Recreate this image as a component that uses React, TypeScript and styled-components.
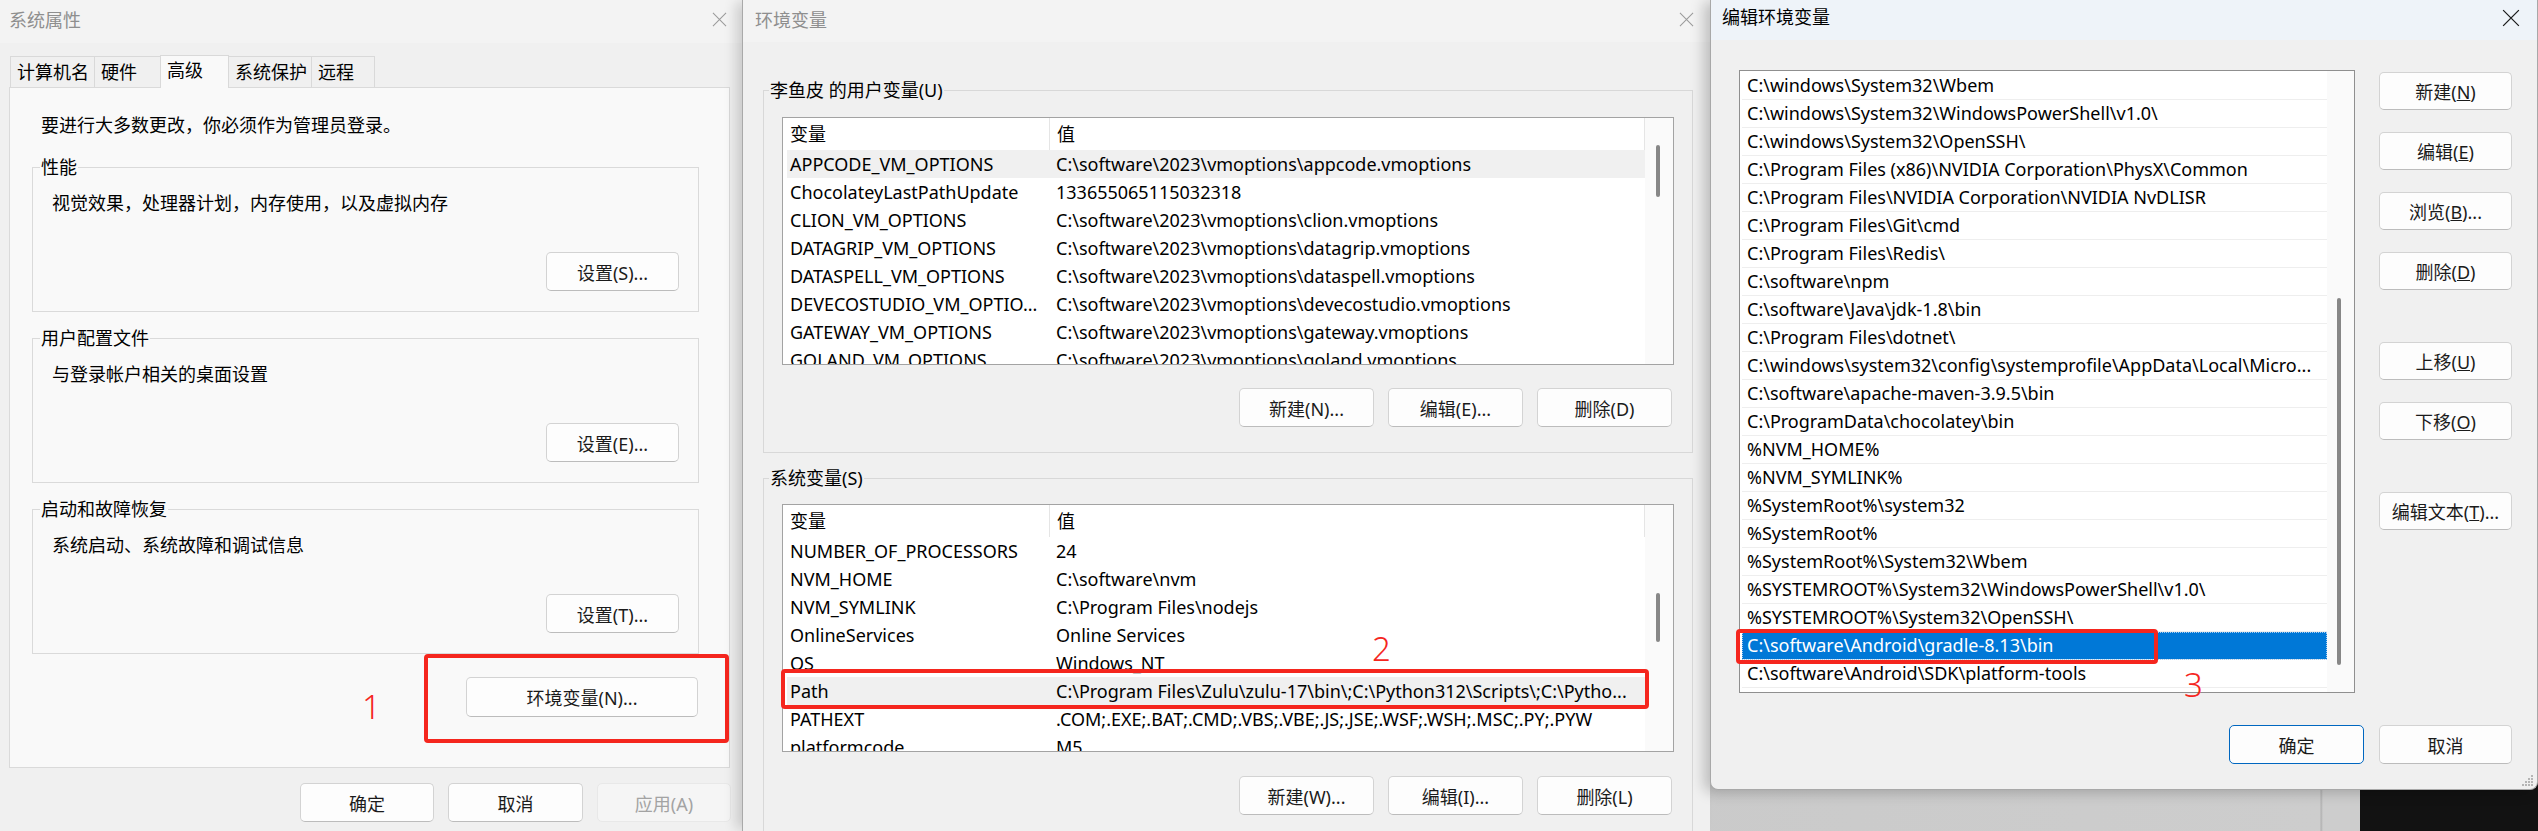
import { FC, ReactNode } from "react";
import styled, { createGlobalStyle, css } from "styled-components";

const RED = "#f5261e";

const GlobalStyle = createGlobalStyle`
  html, body {
    margin: 0;
    padding: 0;
    overflow: hidden;
  }
  body {
    font-family: "Noto Sans", "Noto Sans CJK SC", sans-serif;
    font-size: 18px;
    color: #000;
  }
`;

const Desktop = styled.div`
  display: flex;
  align-items: flex-start;
  width: 2538px;
  height: 831px;
  overflow: hidden;
  background: linear-gradient(
    to right,
    #c3c3c3 0,
    #cdcdcd 2320px,
    #b0b0b0 2321px,
    #cdcdcd 2323px,
    #cdcdcd 2360px,
    #121212 2360px
  );
`;

const Window = styled.div<{ $width: number; $height: number; $variant: "back" | "middle" | "front" }>`
  position: relative;
  flex: none;
  box-sizing: border-box;
  display: flex;
  flex-direction: column;
  width: ${(p) => p.$width}px;
  height: ${(p) => p.$height}px;
  background: #f0f0f0;
  overflow: hidden;
  ${(p) =>
    p.$variant === "middle" &&
    css`
      border-left: 1px solid #a9a9a9;
      box-shadow: -8px 0 12px -2px rgba(0, 0, 0, 0.16);
    `}
  ${(p) =>
    p.$variant === "front" &&
    css`
      border: 1px solid #a8a8a8;
      border-top: none;
      border-radius: 0 0 8px 8px;
      box-shadow: -6px 2px 14px rgba(0, 0, 0, 0.22);
    `}
`;

const TitleBar = styled.div<{ $height: number; $top: number; $left: number; $right: number; $active?: boolean }>`
  flex: none;
  box-sizing: border-box;
  display: flex;
  align-items: flex-start;
  justify-content: space-between;
  height: ${(p) => p.$height}px;
  padding: ${(p) => `${p.$top}px ${p.$right}px 0 ${p.$left}px`};
  background: ${(p) => (p.$active ? "#eef3f9" : "#f3f3f3")};
  color: ${(p) => (p.$active ? "#000" : "#8e8e8e")};
  line-height: 24px;
`;

const CloseGlyph = styled.svg`
  flex: none;
  margin-top: 4px;
`;

const CloseIcon: FC<{ active?: boolean; size?: number }> = ({ active, size = 15 }) => (
  <CloseGlyph width={size} height={size} viewBox="0 0 16 16">
    <path d="M1 1L15 15M15 1L1 15" stroke={active ? "#1a1a1a" : "#9a9a9a"} strokeWidth="1.1" fill="none" />
  </CloseGlyph>
);

const Button = styled.button<{ $width: number; $default?: boolean }>`
  flex: none;
  box-sizing: border-box;
  width: ${(p) => p.$width}px;
  height: 39px;
  padding: 0;
  font-family: inherit;
  font-size: 18px;
  color: #1b1b1b;
  background: #fdfdfd;
  border: 1px solid ${(p) => (p.$default ? "#0067c0" : "#d3d3d3")};
  border-bottom-color: ${(p) => (p.$default ? "#0067c0" : "#bcbcbc")};
  border-radius: 5px;

  &:disabled {
    color: #a3a3a3;
    background: #f5f5f5;
    border-color: #e8e8e8;
  }
`;

const ButtonRow = styled.div<{ $gap: number; $top: number; $right?: number }>`
  display: flex;
  justify-content: flex-end;
  gap: ${(p) => p.$gap}px;
  margin-top: ${(p) => p.$top}px;
  padding-right: ${(p) => p.$right ?? 0}px;
`;

const Frame = styled.div<{ $height: number; $top: number; $pad: string; $border: string }>`
  position: relative;
  flex: none;
  box-sizing: border-box;
  display: flex;
  flex-direction: column;
  height: ${(p) => p.$height}px;
  margin-top: ${(p) => p.$top}px;
  padding: ${(p) => p.$pad};
  border: 1px solid ${(p) => p.$border};
`;

const Legend = styled.span<{ $bg: string; $left: number }>`
  position: absolute;
  top: -13px;
  left: ${(p) => p.$left}px;
  padding: 0 1px;
  line-height: 24px;
  background: ${(p) => p.$bg};
  white-space: nowrap;
`;

type GroupProps = {
  label: string;
  height: number;
  top: number;
  pad: string;
  bg: string;
  labelLeft: number;
  border?: string;
  children: ReactNode;
};

const GroupBox: FC<GroupProps> = ({ label, height, top, pad, bg, labelLeft, border = "#dadada", children }) => (
  <Frame $height={height} $top={top} $pad={pad} $border={border}>
    <Legend $bg={bg} $left={labelLeft}>
      {label}
    </Legend>
    {children}
  </Frame>
);

const RedBox = styled.div<{ $left: number; $top: number; $width: number; $height: number }>`
  position: absolute;
  left: ${(p) => p.$left}px;
  top: ${(p) => p.$top}px;
  width: ${(p) => p.$width}px;
  height: ${(p) => p.$height}px;
  box-sizing: border-box;
  border: 4px solid ${RED};
  border-radius: 4px;
  pointer-events: none;
`;

const Marker = styled.span<{ $left: number; $top: number }>`
  position: absolute;
  left: ${(p) => p.$left}px;
  top: ${(p) => p.$top}px;
  font-family: "Noto Sans", sans-serif;
  font-weight: 300;
  font-size: 33px;
  line-height: 1;
  color: ${RED};
`;

/* ---------- 系统属性 ---------- */

const TabStrip = styled.div`
  display: flex;
  align-items: flex-end;
  height: 32px;
  margin: 12px 0 0 11px;
`;

const Tab = styled.div<{ $width: number; $selected?: boolean }>`
  position: relative;
  box-sizing: border-box;
  width: ${(p) => p.$width}px;
  height: ${(p) => (p.$selected ? 33 : 31)}px;
  margin-left: -1px;
  margin-bottom: ${(p) => (p.$selected ? -1 : 0)}px;
  padding-left: 6px;
  border: 1px solid #d9d9d9;
  border-bottom: none;
  background: ${(p) => (p.$selected ? "#f9f9f9" : "#f0f0f0")};
  line-height: ${(p) => (p.$selected ? 28 : 30)}px;
  z-index: ${(p) => (p.$selected ? 1 : 0)};
  white-space: nowrap;
`;

const TabPanel = styled.div`
  position: relative;
  box-sizing: border-box;
  display: flex;
  flex-direction: column;
  width: 721px;
  height: 681px;
  margin-left: 9px;
  padding: 0 30px 0 22px;
  border: 1px solid #dadada;
  background: #f9f9f9;
`;

const InfoText = styled.div`
  margin: 25px 0 0 9px;
  line-height: 24px;
`;

const Description = styled.div`
  line-height: 24px;
`;

const GroupButton = styled(Button)`
  align-self: flex-end;
  margin-top: auto;
`;

const EnvButton = styled(Button)`
  align-self: flex-end;
  height: 40px;
  margin: 23px 1px 0 0;
`;

const SystemProperties: FC = () => {
  const groups = [
    { label: "性能", text: "视觉效果，处理器计划，内存使用，以及虚拟内存", btn: "设置(S)..." },
    { label: "用户配置文件", text: "与登录帐户相关的桌面设置", btn: "设置(E)..." },
    { label: "启动和故障恢复", text: "系统启动、系统故障和调试信息", btn: "设置(T)..." },
  ];
  const tabs = [
    { name: "计算机名", w: 85 },
    { name: "硬件", w: 67 },
    { name: "高级", w: 69, selected: true },
    { name: "系统保护", w: 84 },
    { name: "远程", w: 64 },
  ];
  return (
    <Window $width={742} $height={831} $variant="back">
      <TitleBar $height={43} $top={8} $left={9} $right={15}>
        <span>系统属性</span>
        <CloseIcon />
      </TitleBar>
      <TabStrip>
        {tabs.map((t) => (
          <Tab key={t.name} $width={t.w} $selected={t.selected}>
            {t.name}
          </Tab>
        ))}
      </TabStrip>
      <TabPanel>
        <InfoText>要进行大多数更改，你必须作为管理员登录。</InfoText>
        {groups.map((g, i) => (
          <GroupBox
            key={g.label}
            label={g.label}
            height={145}
            top={i === 0 ? 30 : 26}
            pad="23px 19px 20px 19px"
            bg="#f9f9f9"
            labelLeft={7}
          >
            <Description>{g.text}</Description>
            <GroupButton $width={133}>{g.btn}</GroupButton>
          </GroupBox>
        ))}
        <EnvButton $width={232}>环境变量(N)...</EnvButton>
        <RedBox $left={414} $top={566} $width={305} $height={89} />
        <Marker $left={352} $top={602}>
          1
        </Marker>
      </TabPanel>
      <ButtonRow $gap={14} $top={15} $right={11}>
        <Button $width={134}>确定</Button>
        <Button $width={135}>取消</Button>
        <Button $width={134} disabled>
          应用(A)
        </Button>
      </ButtonRow>
    </Window>
  );
};

/* ---------- 环境变量 ---------- */

const ListView = styled.div<{ $height: number }>`
  position: relative;
  flex: none;
  box-sizing: border-box;
  display: flex;
  height: ${(p) => p.$height}px;
  border: 1px solid #a3a3a3;
  background: #fff;
`;

const TableArea = styled.div`
  flex: 1;
  min-width: 0;
  overflow: hidden;
`;

const HeaderRow = styled.div`
  display: flex;
  height: 32px;
  line-height: 32px;
`;

const HeaderCell = styled.div<{ $width?: number }>`
  box-sizing: border-box;
  flex: ${(p) => (p.$width ? "none" : "1")};
  width: ${(p) => (p.$width ? `${p.$width}px` : "auto")};
  padding-left: 7px;
  border-right: 1px solid #e5e5e5;
`;

const VarRow = styled.div<{ $highlight?: boolean }>`
  display: flex;
  height: 28px;
  margin-left: 4px;
  line-height: 28px;
  background: ${(p) => (p.$highlight ? "#f0f0f0" : "transparent")};
  white-space: nowrap;
`;

const VarCell = styled.div<{ $width?: number; $pad: number }>`
  box-sizing: border-box;
  flex: ${(p) => (p.$width ? "none" : "1")};
  width: ${(p) => (p.$width ? `${p.$width}px` : "auto")};
  padding-left: ${(p) => p.$pad}px;
  overflow: hidden;
`;

const ScrollTrack = styled.div<{ $width: number }>`
  flex: none;
  width: ${(p) => p.$width}px;
  background: #fafafa;
`;

const Thumb = styled.div<{ $top: number; $height: number; $left: number }>`
  width: 4px;
  height: ${(p) => p.$height}px;
  margin: ${(p) => `${p.$top}px 0 0 ${p.$left}px`};
  border-radius: 2px;
  background: #878787;
`;

const MiddleBody = styled.div`
  display: flex;
  flex-direction: column;
  padding: 0 17px 0 20px;
`;

type VarTableProps = {
  rows: string[][];
  highlight: number;
  thumbTop: number;
  thumbHeight: number;
  children?: ReactNode;
};

const VarTable: FC<VarTableProps> = ({ rows, highlight, thumbTop, thumbHeight, children }) => (
  <ListView $height={248}>
    <TableArea>
      <HeaderRow>
        <HeaderCell $width={267}>变量</HeaderCell>
        <HeaderCell>值</HeaderCell>
      </HeaderRow>
      {rows.map(([name, value], i) => (
        <VarRow key={name} $highlight={i === highlight}>
          <VarCell $width={263} $pad={3}>
            {name}
          </VarCell>
          <VarCell $pad={6}>{value}</VarCell>
        </VarRow>
      ))}
    </TableArea>
    <ScrollTrack $width={28}>
      <Thumb $top={thumbTop} $height={thumbHeight} $left={11} />
    </ScrollTrack>
    {children}
  </ListView>
);

const userVars = [
  ["APPCODE_VM_OPTIONS", "C:\\software\\2023\\vmoptions\\appcode.vmoptions"],
  ["ChocolateyLastPathUpdate", "133655065115032318"],
  ["CLION_VM_OPTIONS", "C:\\software\\2023\\vmoptions\\clion.vmoptions"],
  ["DATAGRIP_VM_OPTIONS", "C:\\software\\2023\\vmoptions\\datagrip.vmoptions"],
  ["DATASPELL_VM_OPTIONS", "C:\\software\\2023\\vmoptions\\dataspell.vmoptions"],
  ["DEVECOSTUDIO_VM_OPTIO...", "C:\\software\\2023\\vmoptions\\devecostudio.vmoptions"],
  ["GATEWAY_VM_OPTIONS", "C:\\software\\2023\\vmoptions\\gateway.vmoptions"],
  ["GOLAND_VM_OPTIONS", "C:\\software\\2023\\vmoptions\\goland.vmoptions"],
];

const systemVars = [
  ["NUMBER_OF_PROCESSORS", "24"],
  ["NVM_HOME", "C:\\software\\nvm"],
  ["NVM_SYMLINK", "C:\\Program Files\\nodejs"],
  ["OnlineServices", "Online Services"],
  ["OS", "Windows_NT"],
  ["Path", "C:\\Program Files\\Zulu\\zulu-17\\bin\\;C:\\Python312\\Scripts\\;C:\\Pytho..."],
  ["PATHEXT", ".COM;.EXE;.BAT;.CMD;.VBS;.VBE;.JS;.JSE;.WSF;.WSH;.MSC;.PY;.PYW"],
  ["platformcode", "M5"],
];

const EnvironmentVariables: FC = () => (
  <Window $width={968} $height={831} $variant="middle">
    <TitleBar $height={42} $top={8} $left={12} $right={16}>
      <span>环境变量</span>
      <CloseIcon />
    </TitleBar>
    <MiddleBody>
      <GroupBox label="李鱼皮 的用户变量(U)" height={363} top={48} pad="26px 18px 0 18px" bg="#f0f0f0" labelLeft={5} border="#d8d8d8">
        <VarTable rows={userVars} highlight={0} thumbTop={27} thumbHeight={52} />
        <ButtonRow $gap={14} $top={23} $right={2}>
          <Button $width={135}>新建(N)...</Button>
          <Button $width={135}>编辑(E)...</Button>
          <Button $width={135}>删除(D)</Button>
        </ButtonRow>
      </GroupBox>
      <GroupBox label="系统变量(S)" height={420} top={25} pad="25px 18px 0 18px" bg="#f0f0f0" labelLeft={5} border="#d8d8d8">
        <VarTable rows={systemVars} highlight={5} thumbTop={88} thumbHeight={49}>
          <RedBox $left={-2} $top={164} $width={868} $height={40} />
          <Marker $left={589} $top={127}>
            2
          </Marker>
        </VarTable>
        <ButtonRow $gap={14} $top={24} $right={2}>
          <Button $width={135}>新建(W)...</Button>
          <Button $width={135}>编辑(I)...</Button>
          <Button $width={135}>删除(L)</Button>
        </ButtonRow>
      </GroupBox>
    </MiddleBody>
  </Window>
);

/* ---------- 编辑环境变量 ---------- */

const FrontBody = styled.div`
  display: flex;
  flex-direction: column;
  padding: 30px 25px 0 28px;
`;

const MainRow = styled.div`
  display: flex;
  gap: 24px;
`;

const PathList = styled.div`
  position: relative;
  flex: none;
  box-sizing: border-box;
  display: flex;
  width: 616px;
  height: 623px;
  border: 1px solid #8f8f8f;
  background: #fff;
`;

const PathRows = styled.div`
  flex: 1;
  min-width: 0;
  padding: 1px 0 0 2px;
  overflow: hidden;
`;

const PathRow = styled.div<{ $selected?: boolean }>`
  box-sizing: border-box;
  height: 28px;
  padding-left: 5px;
  line-height: 27px;
  border-bottom: 1px solid #eeeeee;
  white-space: nowrap;
  overflow: hidden;
  ${(p) =>
    p.$selected &&
    css`
      background: #0078d7;
      color: #fff;
      outline: 1px dotted #a9cdf0;
      outline-offset: -1px;
    `}
`;

const SideButtons = styled.div`
  display: flex;
  flex-direction: column;
  padding-top: 2px;
`;

const SideButton = styled(Button)<{ $gap: number }>`
  margin-top: ${(p) => p.$gap}px;
  height: 38px;
`;

const Grip = styled.svg`
  position: absolute;
  right: 3px;
  bottom: 2px;
`;

const paths = [
  "C:\\windows\\System32\\Wbem",
  "C:\\windows\\System32\\WindowsPowerShell\\v1.0\\",
  "C:\\windows\\System32\\OpenSSH\\",
  "C:\\Program Files (x86)\\NVIDIA Corporation\\PhysX\\Common",
  "C:\\Program Files\\NVIDIA Corporation\\NVIDIA NvDLISR",
  "C:\\Program Files\\Git\\cmd",
  "C:\\Program Files\\Redis\\",
  "C:\\software\\npm",
  "C:\\software\\Java\\jdk-1.8\\bin",
  "C:\\Program Files\\dotnet\\",
  "C:\\windows\\system32\\config\\systemprofile\\AppData\\Local\\Micro...",
  "C:\\software\\apache-maven-3.9.5\\bin",
  "C:\\ProgramData\\chocolatey\\bin",
  "%NVM_HOME%",
  "%NVM_SYMLINK%",
  "%SystemRoot%\\system32",
  "%SystemRoot%",
  "%SystemRoot%\\System32\\Wbem",
  "%SYSTEMROOT%\\System32\\WindowsPowerShell\\v1.0\\",
  "%SYSTEMROOT%\\System32\\OpenSSH\\",
  "C:\\software\\Android\\gradle-8.13\\bin",
  "C:\\software\\Android\\SDK\\platform-tools",
];

const sideButtons: { label: string; key: string; rest?: string; gap: number }[] = [
  { label: "新建(", key: "N", rest: ")", gap: 0 },
  { label: "编辑(", key: "E", rest: ")", gap: 22 },
  { label: "浏览(", key: "B", rest: ")...", gap: 22 },
  { label: "删除(", key: "D", rest: ")", gap: 22 },
  { label: "上移(", key: "U", rest: ")", gap: 52 },
  { label: "下移(", key: "O", rest: ")", gap: 22 },
  { label: "编辑文本(", key: "T", rest: ")...", gap: 52 },
];

const EditEnvironmentVariable: FC = () => (
  <Window $width={828} $height={790} $variant="front">
    <TitleBar $height={40} $top={5} $left={11} $right={17} $active>
      <span>编辑环境变量</span>
      <CloseIcon active size={18} />
    </TitleBar>
    <FrontBody>
      <MainRow>
        <PathList>
          <PathRows>
            {paths.map((p, i) => (
              <PathRow key={p} $selected={i === 20}>
                {p}
              </PathRow>
            ))}
          </PathRows>
          <ScrollTrack $width={27}>
            <Thumb $top={227} $height={367} $left={10} />
          </ScrollTrack>
          <RedBox $left={-4} $top={558} $width={422} $height={35} />
          <Marker $left={444} $top={597}>
            3
          </Marker>
        </PathList>
        <SideButtons>
          {sideButtons.map((b) => (
            <SideButton key={b.key} $width={133} $gap={b.gap}>
              {b.label}
              <u>{b.key}</u>
              {b.rest}
            </SideButton>
          ))}
        </SideButtons>
      </MainRow>
      <ButtonRow $gap={15} $top={32}>
        <Button $width={135} $default>
          确定
        </Button>
        <Button $width={133}>取消</Button>
      </ButtonRow>
    </FrontBody>
    <Grip width="12" height="12" viewBox="0 0 12 12">
      {[
        [9, 0],
        [6, 3],
        [9, 3],
        [3, 6],
        [6, 6],
        [9, 6],
        [0, 9],
        [3, 9],
        [6, 9],
        [9, 9],
      ].map(([x, y]) => (
        <rect key={`${x}-${y}`} x={x} y={y} width="2" height="2" fill="#b5b5b5" />
      ))}
    </Grip>
  </Window>
);

export default function App() {
  return (
    <>
      <GlobalStyle />
      <Desktop>
        <SystemProperties />
        <EnvironmentVariables />
        <EditEnvironmentVariable />
      </Desktop>
    </>
  );
}
